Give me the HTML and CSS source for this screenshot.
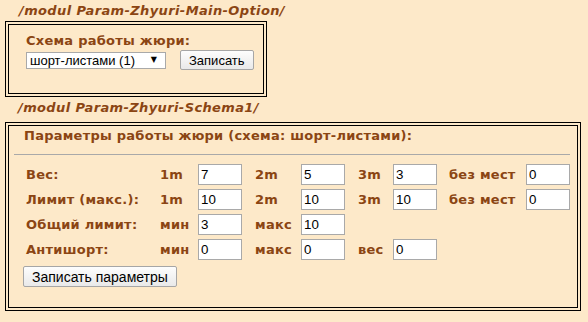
FILE: index.html
```html
<!DOCTYPE html>
<html lang="ru">
<head>
    <meta charset="UTF-8">
    <title>Param-Zhyuri</title>
    <link rel="stylesheet" href="styles.css">
</head>
<body>
    <div class="page">
        <div class="modul-title">/modul Param-Zhyuri-Main-Option/</div>
        <div class="frame frame-main">
            <div class="label">Схема работы жюри:</div>
            <div class="main-row">
                <span class="select-wrap">
                    <select class="select">
                        <option>шорт-листами (1)</option>
                    </select>
                    <span class="select-arrow">▼</span>
                </span>
                <button class="btn">Записать</button>
            </div>
        </div>

        <div class="modul-title modul-title-second">/modul Param-Zhyuri-Schema1/</div>
        <div class="frame frame-params">
            <div class="label params-head">Параметры работы жюри (схема: шорт-листами):</div>
            <hr class="sep">
            <div class="params-grid">
                <!-- Вес -->
                <span class="label">Вес:</span>
                <span class="label">1m</span>
                <span class="cell"><input class="field" value="7"></span>
                <span class="label">2m</span>
                <span class="cell"><input class="field" value="5"></span>
                <span class="label">3m</span>
                <span class="cell"><input class="field" value="3"></span>
                <span class="label">без мест</span>
                <span class="cell"><input class="field" value="0"></span>

                <!-- Лимит -->
                <span class="label">Лимит (макс.):</span>
                <span class="label">1m</span>
                <span class="cell"><input class="field" value="10"></span>
                <span class="label">2m</span>
                <span class="cell"><input class="field" value="10"></span>
                <span class="label">3m</span>
                <span class="cell"><input class="field" value="10"></span>
                <span class="label">без мест</span>
                <span class="cell"><input class="field" value="0"></span>

                <!-- Общий лимит -->
                <span class="label">Общий лимит:</span>
                <span class="label">мин</span>
                <span class="cell"><input class="field" value="3"></span>
                <span class="label">макс</span>
                <span class="cell"><input class="field" value="10"></span>
                <span></span><span></span><span></span><span></span>

                <!-- Антишорт -->
                <span class="label">Антишорт:</span>
                <span class="label">мин</span>
                <span class="cell"><input class="field" value="0"></span>
                <span class="label">макс</span>
                <span class="cell"><input class="field" value="0"></span>
                <span class="label">вес</span>
                <span class="cell"><input class="field" value="0"></span>
                <span></span><span></span>
            </div>
            <button class="btn btn-save">Записать параметры</button>
        </div>
    </div>
</body>
</html>
```

FILE: styles.css
```css
* {
    margin: 0;
    padding: 0;
    box-sizing: border-box;
}

body {
    font-family: "DejaVu Sans", Verdana, sans-serif;
    background: #fde9c9;
}

.page {
    padding: 3px 7px 0 5px;
}

.modul-title {
    font-size: 13px;
    line-height: 16px;
    font-weight: bold;
    font-style: italic;
    letter-spacing: 0.38px;
    color: #8b4513;
    padding-left: 14px;
    margin-bottom: 2px;
}

.modul-title-second {
    margin-top: 3px;
    margin-bottom: 6px;
    padding-left: 13px;
}

.frame {
    border: 4px double #000;
}

.label {
    font-size: 13px;
    line-height: 16px;
    font-weight: bold;
    letter-spacing: 0.25px;
    color: #8b4513;
    white-space: nowrap;
}

/* first block */
.frame-main {
    width: fit-content;
    padding: 8px 9px 23px 17px;
}

.main-row {
    display: flex;
    align-items: center;
    gap: 14px;
    margin-top: 1px;
}

.select-wrap {
    position: relative;
    display: inline-block;
}

.select {
    appearance: none;
    -webkit-appearance: none;
    width: 140px;
    height: 17px;
    border: 1px solid #a9a9a9;
    border-radius: 0;
    background: #fff;
    font-family: "Liberation Sans", Arial, sans-serif;
    font-size: 13px;
    color: #000;
    padding: 0 0 0 3px;
    display: block;
}

.select-arrow {
    position: absolute;
    right: 9px;
    top: 3px;
    font-size: 8px;
    line-height: 10px;
    color: #000;
    pointer-events: none;
}

.btn {
    font-family: "Liberation Sans", Arial, sans-serif;
    font-size: 13px;
    color: #000;
    height: 20px;
    padding: 0 8px;
    border: 1px solid #a6a6a6;
    border-radius: 2px;
    background: linear-gradient(#fdfdfd, #e9e9e9);
}

/* parameters block */
.frame-params {
    padding: 2px 7px 20px 5px;
}

.params-head {
    padding-left: 10px;
}

.sep {
    border: none;
    border-top: 1px solid #a9a9a9;
    margin-top: 10px;
}

.params-grid {
    display: grid;
    grid-template-columns: 134px 38px 57px 46px 57px 35px 56px 77px 44px;
    grid-auto-rows: 25px;
    align-items: center;
    margin: 7px 0 0 12px;
}

.field {
    display: block;
    width: 44px;
    height: 21px;
    border: 1px solid #a9a9a9;
    background: #fff;
    padding: 0 2px;
    font-family: "Liberation Sans", Arial, sans-serif;
    font-size: 13.33px;
    color: #000;
}

.btn-save {
    display: block;
    height: 21px;
    margin: 4px 0 0 9px;
    font-size: 14px;
}
```
